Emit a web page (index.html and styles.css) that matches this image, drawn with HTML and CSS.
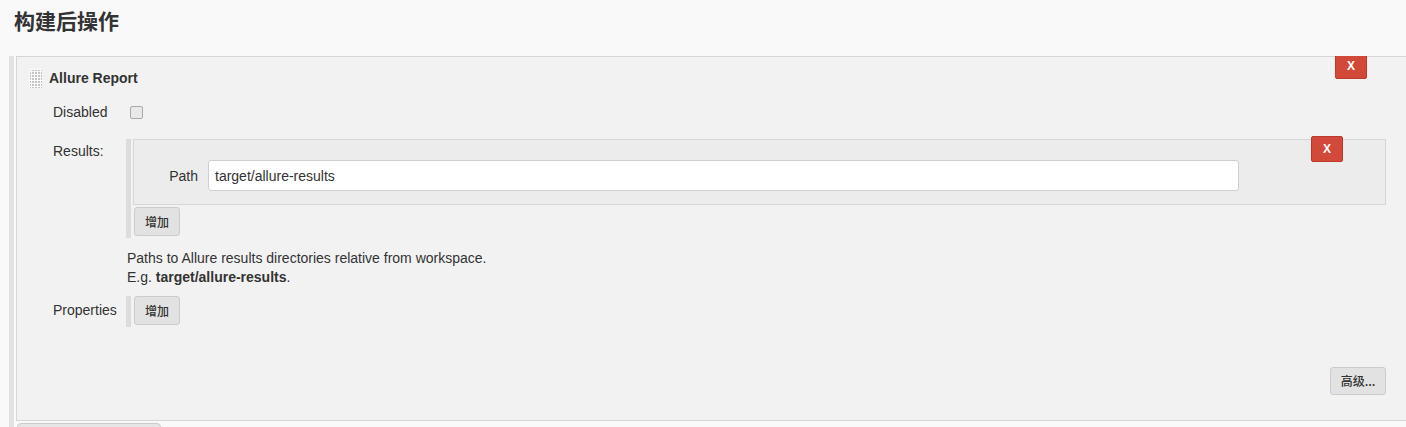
FILE: index.html
```html
<!DOCTYPE html>
<html lang="zh">
<head>
<meta charset="utf-8">
<title>构建后操作</title>
<link rel="stylesheet" href="styles.css">
</head>
<body>
<h1 class="page-title">构建后操作</h1>
<div class="section">
  <div class="card">
    <div class="card-header">
      <svg class="handle" width="13" height="19" viewBox="0 0 13 19" aria-hidden="true">
        <defs>
          <pattern id="grip" width="3" height="3" patternUnits="userSpaceOnUse">
            <rect x="0" y="0" width="2" height="2" fill="#c4c4c4"/>
          </pattern>
        </defs>
        <rect x="0" y="0" width="13" height="19" fill="#fbfbfb"/>
        <rect x="1" y="1" width="12" height="18" fill="url(#grip)"/>
      </svg>
      <span class="card-title">Allure Report</span>
      <button class="btn-danger card-delete" type="button">X</button>
    </div>

    <div class="row row-disabled">
      <div class="label">Disabled</div>
      <div class="field"><input type="checkbox" class="checkbox"></div>
    </div>

    <div class="row row-results">
      <div class="label label-results">Results:</div>
      <div class="field">
        <div class="repeated">
          <div class="chunk">
            <div class="chunk-row">
              <span class="chunk-label">Path</span>
              <input class="text-input" type="text" value="target/allure-results">
            </div>
            <button class="btn-danger chunk-delete" type="button">X</button>
          </div>
          <button class="btn add-btn" type="button">增加</button>
        </div>
      </div>
    </div>

    <div class="help">
      <div>Paths to Allure results directories relative from workspace.</div>
      <div>E.g. <b>target/allure-results</b>.</div>
    </div>

    <div class="row row-props">
      <div class="label label-props">Properties</div>
      <div class="field">
        <div class="repeated">
          <button class="btn add-btn add-first" type="button">增加</button>
        </div>
      </div>
    </div>

    <div class="advanced-row">
      <button class="btn advanced-btn" type="button">高级...</button>
    </div>
  </div>
  <button class="btn below-btn" type="button"></button>
</div>
</body>
</html>
```

FILE: styles.css
```css
html, body {
  margin: 0;
  padding: 0;
}
body {
  background: #f9f9f9;
  color: #333;
  font-family: "Liberation Sans", Arial, "Noto Sans CJK SC", sans-serif;
  font-size: 14px;
  overflow: hidden;
  width: 1406px;
  height: 427px;
}

.page-title {
  box-sizing: border-box;
  margin: 0;
  height: 56px;
  padding: 8px 0 0 14px;
  font-family: "Noto Sans CJK SC", sans-serif;
  font-size: 21px;
  line-height: 24px;
  font-weight: bold;
  color: #333;
}

.section {
  margin-left: 9px;
  border-left: 5px solid #e2e2e2;
  padding-left: 2px;
  height: 371px;
  overflow: hidden;
}

.card {
  position: relative;
  background: #f2f2f2;
  border: 1px solid #d6d6d6;
  border-right: none;
  padding: 0 20px 25px 0;
}

.card-header {
  display: flex;
  align-items: center;
  height: 20px;
  padding: 11px 0 0 12px;
}
.handle {
  display: block;
  margin-right: 7px;
}
.card-title {
  font-weight: bold;
  font-size: 14px;
}

.btn-danger {
  position: absolute;
  box-sizing: border-box;
  width: 32px;
  height: 26px;
  padding: 0;
  background: #d24939;
  border: 1px solid #bb3a2c;
  border-radius: 2px;
  color: #fff;
  font-family: "Liberation Sans", Arial, sans-serif;
  font-weight: bold;
  font-size: 12px;
  line-height: 24px;
  text-align: center;
}
.card-delete {
  top: -4px;
  right: 39px;
}

.row {
  display: grid;
  grid-template-columns: 109px 1fr;
}
.label {
  padding-left: 36px;
  line-height: 16px;
}
.row-disabled {
  margin-top: 12px;
  height: 24px;
  align-items: center;
}
.checkbox {
  display: block;
  box-sizing: border-box;
  -webkit-appearance: none;
  appearance: none;
  width: 13px;
  height: 13px;
  margin: 0 0 0 4px;
  background: #e9e9e9;
  border: 1px solid #a9a9a9;
  border-radius: 2px;
}

.row-results {
  margin-top: 15px;
}
.label-results {
  padding-top: 4px;
}

.repeated {
  border-left: 5px solid #dcdcdc;
  padding-left: 2px;
  padding-bottom: 2px;
}
.chunk {
  position: relative;
  background: #ececec;
  border: 1px solid #d6d6d6;
  padding: 20px 0 13px 0;
}
.chunk-row {
  display: flex;
  align-items: center;
}
.chunk-label {
  width: 64px;
  text-align: right;
  margin-right: 10px;
}
.text-input {
  box-sizing: border-box;
  width: 1031px;
  height: 31px;
  margin: 0;
  padding: 0 6px;
  background: #fff;
  border: 1px solid #cfcfcf;
  border-radius: 3px;
  color: #333;
  font-family: "Liberation Sans", Arial, sans-serif;
  font-size: 14px;
  outline: none;
}
.chunk-delete {
  top: -4px;
  right: 42px;
}

.btn {
  box-sizing: border-box;
  display: block;
  padding: 0;
  background: #e2e2e2;
  border: 1px solid #cbcbcb;
  border-radius: 3px;
  color: #333;
  font-family: "Noto Sans CJK SC", sans-serif;
  font-size: 12px;
  font-weight: 500;
  text-align: center;
}
.add-btn {
  width: 46px;
  height: 29px;
  margin: 2px 0 0 1px;
  line-height: 27px;
}
.add-first {
  margin-top: 0;
}

.help {
  margin-top: 11px;
  padding-left: 110px;
  line-height: 19px;
}
.help b {
  font-weight: bold;
}

.row-props {
  margin-top: 9px;
}
.label-props {
  padding-top: 6px;
}

.advanced-row {
  display: flex;
  justify-content: flex-end;
  margin-top: 40px;
}
.advanced-btn {
  width: 56px;
  height: 28px;
  line-height: 26px;
}

.below-btn {
  width: 144px;
  height: 28px;
  margin: 2px 0 0 1px;
  border-radius: 4px;
  background: #e6e6e6;
}
```
